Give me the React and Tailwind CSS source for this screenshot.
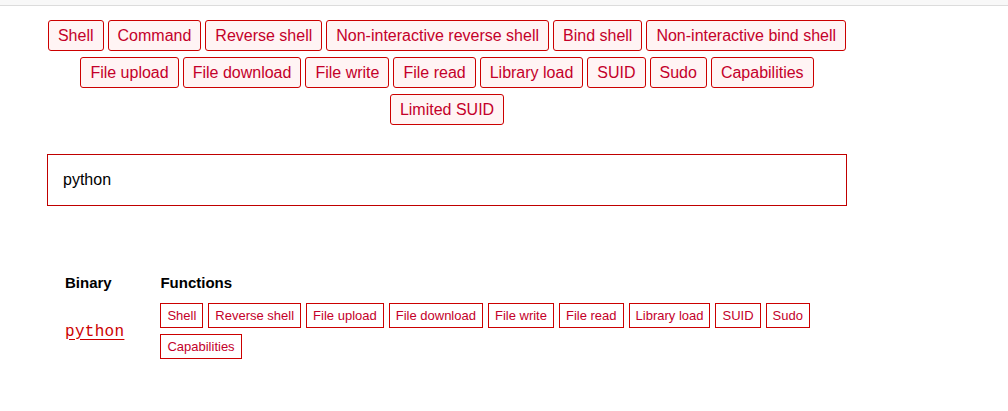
import React, { useState } from 'react';

// Filter buttons shown above the search box
const FILTERS = [
  'Shell',
  'Command',
  'Reverse shell',
  'Non-interactive reverse shell',
  'Bind shell',
  'Non-interactive bind shell',
  'File upload',
  'File download',
  'File write',
  'File read',
  'Library load',
  'SUID',
  'Sudo',
  'Capabilities',
  'Limited SUID',
];

const RESULTS = [
  {
    name: 'python',
    functions: [
      'Shell',
      'Reverse shell',
      'File upload',
      'File download',
      'File write',
      'File read',
      'Library load',
      'SUID',
      'Sudo',
      'Capabilities',
    ],
  },
];

const App = () => {
  const [query, setQuery] = useState('python');

  return (
    <div className="min-h-screen bg-white font-['Liberation_Sans',Arial,sans-serif] text-black">
      <div className="h-[6px] bg-[#f8f8f8] border-b border-[#dcdcdc]" />

      <div className="ml-[47px] w-[800px] pt-[14px]">
        <ul className="flex flex-wrap justify-center gap-x-[4px] gap-y-[6px]">
          {FILTERS.map((f) => (
            <li key={f}>
              <a
                href="#"
                className="block rounded-[3px] border border-[#cc0000] bg-[#fff4f4] px-[9px] py-[4px] text-[16px] leading-[21px] text-[#c4002a] no-underline"
              >
                {f}
              </a>
            </li>
          ))}
        </ul>

        <input
          type="text"
          value={query}
          onChange={(e) => setQuery(e.target.value)}
          className="mt-[29px] block h-[52px] w-full border border-[#c00000] px-[15px] text-[16px] text-black outline-none"
        />

        <table className="mt-[67px] border-collapse">
          <thead>
            <tr>
              <th className="px-[18px] pb-[10px] text-left text-[15px] font-bold leading-[20px]">Binary</th>
              <th className="px-[18px] pb-[10px] text-left text-[15px] font-bold leading-[20px]">Functions</th>
            </tr>
          </thead>
          <tbody>
            {RESULTS.map((r) => (
              <tr key={r.name}>
                <td className="px-[18px] align-middle">
                  <a
                    href="#"
                    className="font-['Liberation_Mono',monospace] text-[16px] tracking-[0.3px] text-[#cc0000] underline underline-offset-[3px]"
                  >
                    {r.name}
                  </a>
                </td>
                <td className="px-[18px] align-middle">
                  <ul className="flex flex-wrap gap-x-[5px] gap-y-[6px]">
                    {r.functions.map((fn) => (
                      <li key={fn}>
                        <a
                          href="#"
                          className="block border border-[#cc0000] bg-white px-[6px] py-[3px] text-[13px] leading-[17px] text-[#c4002a] no-underline"
                        >
                          {fn}
                        </a>
                      </li>
                    ))}
                  </ul>
                </td>
              </tr>
            ))}
          </tbody>
        </table>
      </div>
    </div>
  );
};

export default App;
